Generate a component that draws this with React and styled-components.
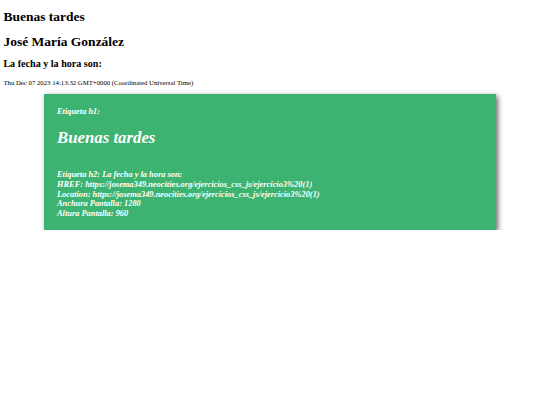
import React from "react";
import styled, { createGlobalStyle } from "styled-components";

const GlobalStyle = createGlobalStyle`
  html, body {
    margin: 0;
    padding: 0;
    background: #ffffff;
  }
  body {
    font-family: "Liberation Serif", "Times New Roman", serif;
    color: #000;
  }
`;

const Page = styled.div`
  padding: 0 3.4px;
  display: flow-root;
`;

const Title = styled.h1`
  font-size: 13.5px;
  font-weight: bold;
  margin: 9px 0;
  line-height: 15.5px;
`;

const Subtitle = styled.h2`
  font-size: 10.1px;
  font-weight: bold;
  margin: 9px 0;
  line-height: 11.6px;
`;

const DateText = styled.p`
  font-size: 6.75px;
  margin: 8px 0 0;
  line-height: 7.8px;
`;

const Card = styled.section`
  width: 452px;
  margin: 8px auto 0;
  box-sizing: border-box;
  background: #3cb371;
  color: #ffffff;
  padding: 13px 13px 11px;
  box-shadow: 2px 2px 5px rgba(0, 0, 0, 0.6);
  font-style: italic;
  font-weight: bold;
`;

const Label = styled.div`
  font-size: 8.4px;
  line-height: 9.7px;
`;

const Greeting = styled.h1`
  font-size: 16.8px;
  font-weight: bold;
  font-style: italic;
  line-height: 20px;
  margin: 11px 0 22px;
`;

const InfoList = styled.div`
  display: flex;
  flex-direction: column;
`;

const App = () => {
  return (
    <>
      <GlobalStyle />
      <Page>
        <Title>Buenas tardes</Title>
        <Title>José María González</Title>
        <Subtitle>La fecha y la hora son:</Subtitle>
        <DateText>Thu Dec 07 2023 14:13:32 GMT+0000 (Coordinated Universal Time)</DateText>
        <Card>
          <Label>Etiqueta h1:</Label>
          <Greeting>Buenas tardes</Greeting>
          <InfoList>
            <Label>Etiqueta h2: La fecha y la hora son:</Label>
            <Label>HREF: https://josema349.neocities.org/ejercicios_css_js/ejercicio3%20(1)</Label>
            <Label>Location: https://josema349.neocities.org/ejercicios_css_js/ejercicio3%20(1)</Label>
            <Label>Anchura Pantalla: 1280</Label>
            <Label>Altura Pantalla: 960</Label>
          </InfoList>
        </Card>
      </Page>
    </>
  );
};

export default App;
